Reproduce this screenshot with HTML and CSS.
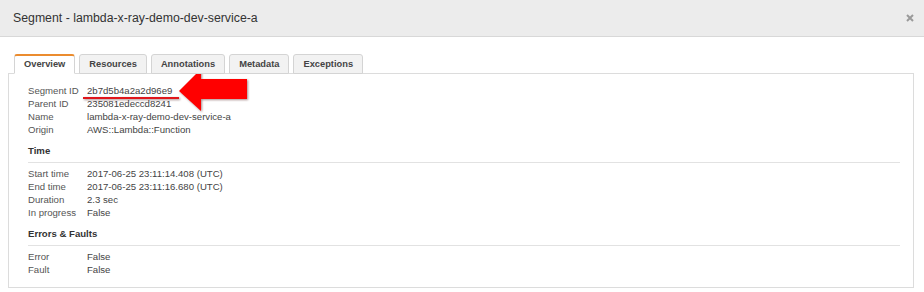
FILE: index.html
```html
<!DOCTYPE html>
<html lang="en">
<head>
    <meta charset="UTF-8">
    <title>Segment - lambda-x-ray-demo-dev-service-a</title>
    <link rel="stylesheet" href="styles.css">
</head>
<body>
    <div class="modal-header">
        <span class="modal-title">Segment - lambda-x-ray-demo-dev-service-a</span>
        <svg class="close" width="8" height="8" viewBox="0 0 8 8">
            <path d="M1 1 L7 7 M7 1 L1 7" stroke="#9a9a9a" stroke-width="2"/>
        </svg>
    </div>

    <div class="modal-body">
        <ul class="tabs">
            <li class="tab active">Overview</li>
            <li class="tab">Resources</li>
            <li class="tab">Annotations</li>
            <li class="tab">Metadata</li>
            <li class="tab">Exceptions</li>
        </ul>

        <div class="tab-panel">
            <!-- annotation drawn over the screenshot -->
            <svg class="callout" width="180" height="56" viewBox="70 60 180 56">
                <line x1="82" y1="97" x2="178" y2="97" stroke="#e0161b" stroke-width="2"/>
                <polygon points="178,90 200,68 200,78 246,78 246,98 200,98 200,110" fill="#ff0000"/>
            </svg>

            <dl class="props">
                <dt>Segment ID</dt><dd>2b7d5b4a2a2d96e9</dd>
                <dt>Parent ID</dt><dd>235081edeccd8241</dd>
                <dt>Name</dt><dd>lambda-x-ray-demo-dev-service-a</dd>
                <dt>Origin</dt><dd>AWS::Lambda::Function</dd>
            </dl>

            <h3 class="section-title">Time</h3>
            <dl class="props">
                <dt>Start time</dt><dd>2017-06-25 23:11:14.408 (UTC)</dd>
                <dt>End time</dt><dd>2017-06-25 23:11:16.680 (UTC)</dd>
                <dt>Duration</dt><dd>2.3 sec</dd>
                <dt>In progress</dt><dd>False</dd>
            </dl>

            <h3 class="section-title">Errors &amp; Faults</h3>
            <dl class="props">
                <dt>Error</dt><dd>False</dd>
                <dt>Fault</dt><dd>False</dd>
            </dl>
        </div>
    </div>
</body>
</html>
```

FILE: styles.css
```css
* {
    margin: 0;
    padding: 0;
    box-sizing: border-box;
}

body {
    font-family: "Liberation Sans", Arial, sans-serif;
    background: #fff;
    color: #444;
    width: 924px;
    height: 292px;
    overflow: hidden;
}

/* Header */
.modal-header {
    height: 37px;
    background: #ececec;
    border-bottom: 1px solid #d8d8d8;
    display: flex;
    align-items: center;
    justify-content: space-between;
    padding: 0 10px 0 13px;
}

.modal-title {
    font-size: 12.3px;
    color: #333;
}

.close {
    display: block;
}

/* Body */
.modal-body {
    padding: 17px 10px 0 8px;
}

.tabs {
    list-style: none;
    display: flex;
    gap: 4px;
    padding-left: 6px;
    margin-bottom: -1px;
    position: relative;
    z-index: 1;
}

.tab {
    height: 20px;
    line-height: 19px;
    font-size: 9.3px;
    font-weight: bold;
    color: #444;
    background: #f2f2f2;
    border: 1px solid #d4d4d4;
    border-radius: 3px 3px 0 0;
    padding: 0 9px;
}

.tab.active {
    background: #fff;
    border-top: 2px solid #eb8c2f;
    border-bottom-color: #fff;
    line-height: 17px;
}

.tab-panel {
    position: relative;
    border: 1px solid #dcdcdc;
    padding: 10px 13px 11px 19px;
    font-size: 9.6px;
}

.callout {
    position: absolute;
    left: 62px;
    top: -13px;
    filter: drop-shadow(1px 1px 1px rgba(60, 0, 0, 0.45));
}

.props {
    display: grid;
    grid-template-columns: 59px 1fr;
    line-height: 13px;
}

.props dt {
    color: #555;
}

.props dd {
    color: #444;
}

.section-title {
    font-size: 9.6px;
    font-weight: bold;
    color: #333;
    line-height: 13px;
    margin-top: 8px;
    padding-bottom: 5px;
    border-bottom: 1px solid #e2e2e2;
    margin-bottom: 4px;
}
```
